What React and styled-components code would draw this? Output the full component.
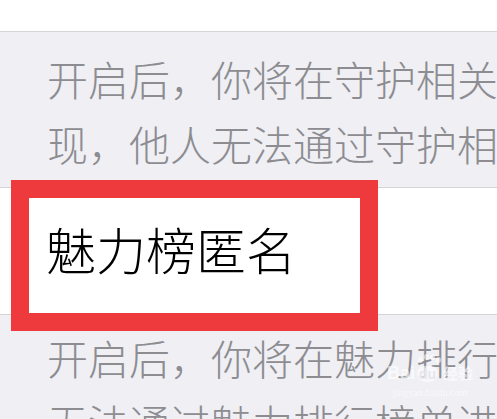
import React from "react";
import styled, { createGlobalStyle } from "styled-components";

const Global = createGlobalStyle`
  html, body {
    margin: 0;
    padding: 0;
    background: #efeff4;
    overflow: hidden;
  }
  body {
    font-family: "Noto Sans CJK SC", "Noto Sans", sans-serif;
  }
`;

const Page = styled.div`
  position: relative;
  width: 497px;
  height: 419px;
  overflow: hidden;
  background: #efeff4;
`;

const TopBar = styled.div`
  height: 31px;
  background: #ffffff;
  border-bottom: 1px solid #d4d4d8;
`;

const Section = styled.div`
  padding: ${(p) => p.$pad};
  background: #efeff4;
`;

const Desc = styled.div`
  font-size: 41px;
  font-weight: 300;
  line-height: 65px;
  color: #8c8c91;
  white-space: nowrap;
  padding-left: 47px;
`;

const Row = styled.div`
  height: 128px;
  box-sizing: border-box;
  background: #ffffff;
  border-top: 1px solid #d4d4d8;
  border-bottom: 1px solid #d4d4d8;
  display: flex;
  align-items: center;
  padding: 0 0 6px 46px;
`;

const Title = styled.div`
  font-size: 50px;
  font-weight: 300;
  line-height: 1;
  color: #000000;
`;

const Highlight = styled.div`
  position: absolute;
  left: 11px;
  top: 180px;
  width: 331px;
  height: 115px;
  border: 18px solid #ee3a3c;
`;

const Watermark = styled.div`
  position: absolute;
  left: 384px;
  top: 364px;
  width: 92px;
  display: flex;
  flex-direction: column;
  align-items: center;
  color: rgba(255, 255, 255, 0.65);
  font-family: "Liberation Sans", Arial, sans-serif;
  pointer-events: none;
`;

const Brand = styled.div`
  display: flex;
  align-items: flex-end;
  font-size: 18px;
  font-weight: bold;
  line-height: 18px;
`;

const Paw = styled.span`
  position: relative;
  display: inline-block;
  margin: 0 2px;
  padding: 0 2px;
  background: rgba(255, 255, 255, 0.55);
  color: #e6e6ec;
  border-radius: 7px 7px 9px 9px;
  font-size: 14px;
  line-height: 16px;
`;

const Pad = styled.i`
  position: absolute;
  top: ${(p) => p.$top}px;
  left: ${(p) => p.$left}px;
  width: 5px;
  height: 6px;
  border-radius: 50%;
  background: rgba(255, 255, 255, 0.55);
`;

const Jing = styled.span`
  font-family: "Noto Sans CJK SC", sans-serif;
  font-size: 15px;
  line-height: 18px;
  margin-left: 3px;
`;

const Url = styled.div`
  font-family: "Liberation Serif", serif;
  font-size: 10px;
  line-height: 12px;
  margin-top: 5px;
`;

export default function App() {
  return (
    <>
      <Global />
      <Page>
        <TopBar />
        <Section $pad="14px 0 11px">
          <Desc>
            开启后，你将在守护相关页面隐身，不再出
            <br />
            现，他人无法通过守护相关页面找到你
          </Desc>
        </Section>
        <Row>
          <Title>魅力榜匿名</Title>
        </Row>
        <Section $pad="10px 0 0">
          <Desc>
            开启后，你将在魅力排行榜中匿名展示，他人
            <br />
            无法通过魅力排行榜单进入你的主页
          </Desc>
        </Section>
        <Highlight />
        <Watermark>
          <Brand>
            Bai
            <Paw>
              <Pad $top={-9} $left={1} />
              <Pad $top={-12} $left={7} />
              <Pad $top={-12} $left={13} />
              <Pad $top={-9} $left={19} />
              du
            </Paw>
            <Jing>经验</Jing>
          </Brand>
          <Url>jingyan.baidu.com</Url>
        </Watermark>
      </Page>
    </>
  );
}
